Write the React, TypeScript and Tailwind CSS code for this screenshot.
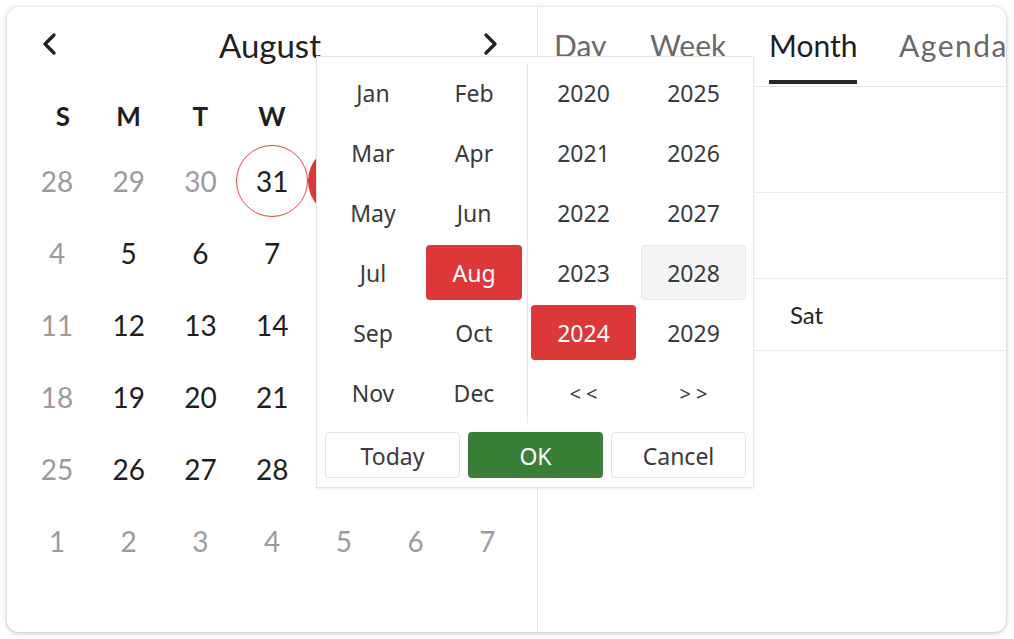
import React from "react";

const cal = { fontFamily: "Lato, 'Open Sans', sans-serif" };
const pop = { fontFamily: "'Noto Sans', 'Open Sans', sans-serif" };

type Day = { n: number | null; muted?: boolean; today?: boolean; selected?: boolean };

// Days at columns Thu–Sat of the first five weeks sit under the picker popup.
const weeks: Day[][] = [
  [{ n: 28, muted: true }, { n: 29, muted: true }, { n: 30, muted: true }, { n: 31, today: true }, { n: null, selected: true }, { n: null }, { n: null }],
  [{ n: 4, muted: true }, { n: 5 }, { n: 6 }, { n: 7 }, { n: null }, { n: null }, { n: null }],
  [{ n: 11, muted: true }, { n: 12 }, { n: 13 }, { n: 14 }, { n: null }, { n: null }, { n: null }],
  [{ n: 18, muted: true }, { n: 19 }, { n: 20 }, { n: 21 }, { n: null }, { n: null }, { n: null }],
  [{ n: 25, muted: true }, { n: 26 }, { n: 27 }, { n: 28 }, { n: null }, { n: null }, { n: null }],
  [1, 2, 3, 4, 5, 6, 7].map((n) => ({ n, muted: true })),
];

const months = ["Jan", "Feb", "Mar", "Apr", "May", "Jun", "Jul", "Aug", "Sep", "Oct", "Nov", "Dec"];
const years = ["2020", "2025", "2021", "2026", "2022", "2027", "2023", "2028", "2024", "2029", "< <", "> >"];

function Chevron({ dir }: { dir: "left" | "right" }) {
  return (
    <svg width="18" height="24" viewBox="0 0 18 24" fill="none">
      {dir === "left" ? (
        <polyline points="13,3 4,12 13,21" stroke="#222" strokeWidth="3.4" strokeLinecap="round" strokeLinejoin="round" />
      ) : (
        <polyline points="5,3 14,12 5,21" stroke="#222" strokeWidth="3.4" strokeLinecap="round" strokeLinejoin="round" />
      )}
    </svg>
  );
}

function DayCell({ d }: { d: Day }) {
  let cls = "w-[72px] h-[72px] rounded-full flex items-center justify-center text-[28px] ";
  if (d.selected) cls += "bg-[#dc3838] text-white";
  else if (d.today) cls += "border border-[#e04848] text-[#1e1e1e]";
  else if (d.muted) cls += "text-[#9b9b9b]";
  else cls += "text-[#1e1e1e]";
  return <div className={cls}>{d.n}</div>;
}

export default function App() {
  return (
    <div className="w-[1014px] h-[639px] bg-white pt-[7px] pl-[7px]">
      <div className="relative w-[999px] h-[625px] rounded-[12px] bg-white shadow-[0_1px_5px_rgba(0,0,0,0.28)] overflow-hidden flex" style={cal}>
        {/* Left mini calendar */}
        <div className="w-[531px] shrink-0 border-r border-[#e8e8e8] px-[14px]">
          <div className="h-[74px] flex items-center justify-between pl-[20px] pr-[24px]">
            <Chevron dir="left" />
            <div className="text-[33px] text-[#222] leading-none pt-[2px]">August</div>
            <Chevron dir="right" />
          </div>
          <div className="h-[64px] pt-[6px] grid grid-cols-7">
            {["S", "M", "T", "W", "", "", ""].map((w, i) => (
              <div key={i} className={"flex items-center justify-center text-[26px] font-bold text-[#1e1e1e] " + (i === 0 ? "pl-[12px]" : "")}>
                {w}
              </div>
            ))}
          </div>
          <div className="flex flex-col">
            {weeks.map((wk, i) => (
              <div key={i} className="grid grid-cols-7 h-[72px]">
                {wk.map((d, j) => (
                  <DayCell key={j} d={d} />
                ))}
              </div>
            ))}
          </div>
        </div>

        {/* Right scheduler */}
        <div className="flex-1 min-w-0 flex flex-col">
          <div className="h-[80px] border-b border-[#e8e8e8] flex pl-[16px] whitespace-nowrap text-[30px]">
            {[
              { t: "Day", w: "w-[96px]" },
              { t: "Week", w: "w-[119px]" },
              { t: "Month", w: "w-[130px]", active: true },
              { t: "Agenda", w: "w-[130px] tracking-[1.5px]" },
            ].map((tab) => (
              <div key={tab.t} className={tab.w + " shrink-0"}>
                <div className="inline-flex flex-col">
                  <div className={"pt-[19px] leading-[38px] " + (tab.active ? "text-[#1e1e1e]" : "text-[#6a6a6a]")}>{tab.t}</div>
                  {tab.active ? <div className="mt-[16px] h-[4px] bg-[#262626]" /> : null}
                </div>
              </div>
            ))}
          </div>
          <div className="h-[106px] border-b border-[#ebebeb]" />
          <div className="h-[86px] border-b border-[#ebebeb]" />
          <div className="h-[72px] border-b border-[#ebebeb] flex items-center pl-[252px] text-[24px] text-[#222]">Sat</div>
        </div>

        {/* Month / year picker popup */}
        <div
          className="absolute left-[309px] top-[49px] w-[438px] h-[432px] bg-white border border-[#e3e3e3] shadow-[0_1px_2px_rgba(0,0,0,0.08)]"
          style={pop}
        >
          <div className="flex h-[366px]">
            <div className="w-[210px] pl-[8px] pt-[8px] grid grid-cols-[96px_96px] auto-rows-[55px] gap-[5px] content-start">
              {months.map((m) => (
                <div
                  key={m}
                  className={
                    "flex items-center justify-center pt-[2px] rounded-[4px] text-[23px] " +
                    (m === "Aug" ? "bg-[#dc3838] text-white" : "text-[#3a3a3a]")
                  }
                >
                  {m}
                </div>
              ))}
            </div>
            <div className="w-px mt-[6px] bg-[#e6e6e6]" />
            <div className="pl-[3px] pt-[8px] grid grid-cols-[105px_105px] auto-rows-[55px] gap-[5px] content-start">
              {years.map((y) => (
                <div
                  key={y}
                  className={
                    "flex items-center justify-center pt-[2px] rounded-[4px] " +
                    (y.includes("<") || y.includes(">") ? "text-[20px] " : "text-[23px] ") +
                    (y === "2024"
                      ? "bg-[#dc3838] text-white"
                      : y === "2028"
                      ? "bg-[#f5f5f5] border border-[#e8e8e8] text-[#3a3a3a]"
                      : "text-[#3a3a3a]")
                  }
                >
                  {y}
                </div>
              ))}
            </div>
          </div>
          <div className="flex gap-[8px] pl-[8px] mt-[9px]">
            <button className="w-[135px] h-[46px] pt-[2px] rounded-[4px] border border-[#e3e3e3] bg-white text-[23px] text-[#3a3a3a]">Today</button>
            <button className="w-[135px] h-[46px] pt-[2px] rounded-[4px] bg-[#3a7f37] text-[23px] text-white">OK</button>
            <button className="w-[135px] h-[46px] pt-[2px] rounded-[4px] border border-[#e3e3e3] bg-white text-[23px] text-[#3a3a3a]">Cancel</button>
          </div>
        </div>
      </div>
    </div>
  );
}
